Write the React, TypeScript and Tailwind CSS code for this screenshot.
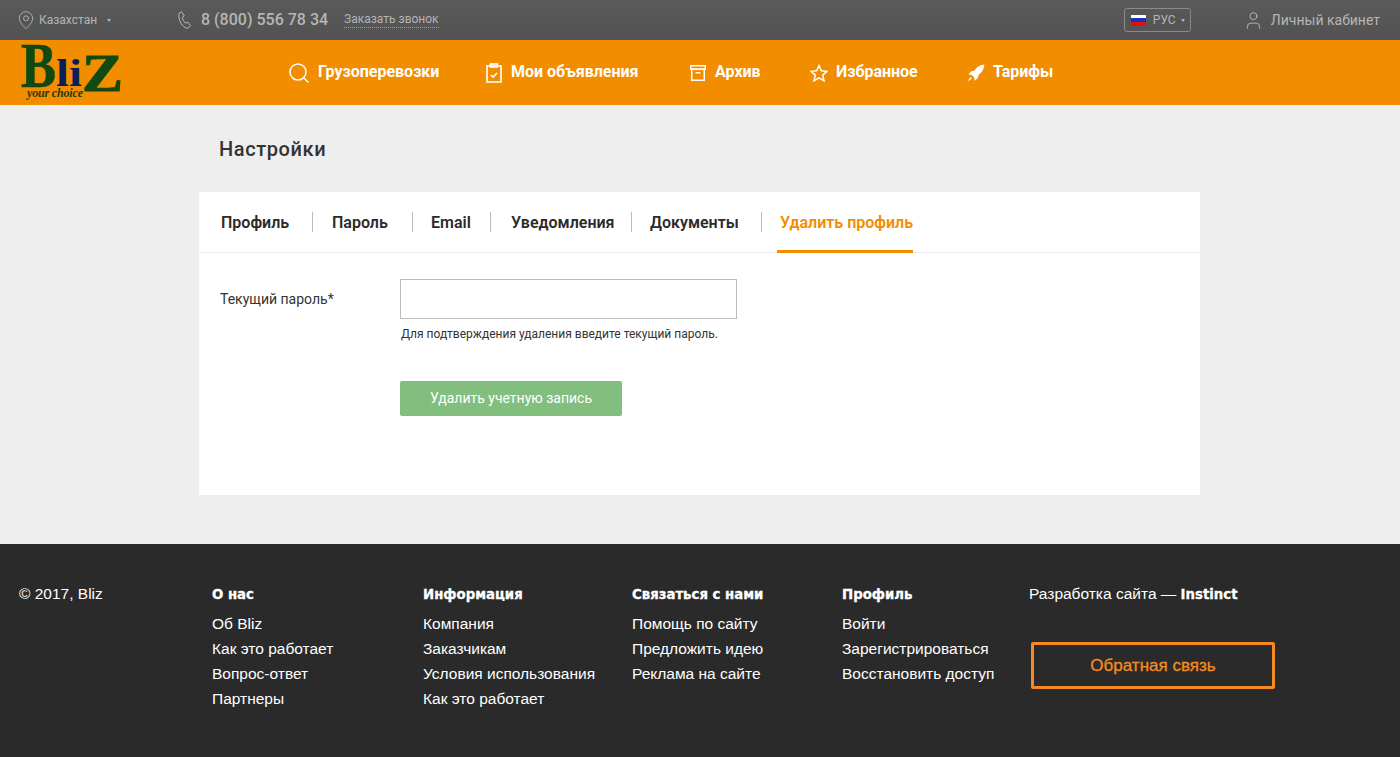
import { FC, ReactNode } from 'react';
import { MapPin, Search, User } from 'lucide-react';

const RocketIcon: FC = () => (
  <svg width="18" height="18" viewBox="0 0 18 18" fill="#fff">
    <path d="M17.500.5c-4.500.3-7.600 2.400-10 6L4 7.500 1.500 10.500l3.300.5 2.400 2.400.5 3.300 3-2.500 1-3.500c3.600-2.400 5.500-6 5.800-10.700z" />
    <path d="M3.500 13 .5 17.500 5 14.500z" />
  </svg>
);

const ClipboardIcon: FC = () => (
  <svg width="16" height="20" viewBox="0 0 16 20" fill="none" stroke="#fff" strokeWidth="1.6" className="block">
    <rect x="1" y="3" width="14" height="16" />
    <rect x="4.500" y="1" width="7" height="3" />
    <path d="M5 12l2 2 4-4" />
  </svg>
);

const ArchiveIcon: FC = () => (
  <svg width="16" height="16" viewBox="0 0 16 16" fill="none" stroke="#fff" strokeWidth="1.5" className="block">
    <rect x=".75" y=".75" width="14.500" height="3.500" />
    <rect x="1.750" y="4.250" width="12.500" height="11" />
    <path d="M5.500 7.750h5" />
  </svg>
);

const StarIcon: FC = () => (
  <svg width="18" height="18" viewBox="0 0 18 18" fill="none" stroke="#fff" strokeWidth="1.5" className="block">
    <path d="M9 1.500l2.300 5.300 5.700.5-4.300 3.800 1.300 5.700L9 13.800l-5 3 1.300-5.700L1 7.300l5.700-.5z" />
  </svg>
);

const PhoneIcon: FC = () => (
  <svg width="14" height="18" viewBox="0 0 14 18" fill="none" stroke="#bbbbbb" strokeWidth="1" className="block">
    <path d="M3.500 .8 1.200 2.300C.3 5 1 9 3 12.300c1.500 2.500 3.800 4.500 6.300 5l2.500-1.800.8-1-3-3.500-2 1.300C6 11 4.500 8.500 4.400 6.300l1.900-1.300z" />
  </svg>
);

const Caret: FC = () => (
  <span className="h-0 w-0 border-x-[2.5px] border-t-[3px] border-x-transparent border-t-[#b5b5b5]" />
);

const Logo: FC = () => (
  <svg width="102" height="54" viewBox="0 0 102 54" className="block overflow-visible">
    <text x="1" y="41" fontFamily="Liberation Serif" fontWeight="700" fontSize="64" fill="#0f4a12" stroke="#0f4a12" strokeWidth="0.6" textLength="35" lengthAdjust="spacingAndGlyphs">B</text>
    <text x="36" y="40" fontFamily="Liberation Serif" fontWeight="700" fontSize="38" fill="#0c1f55" textLength="26" lengthAdjust="spacingAndGlyphs">li</text>
    <text x="62" y="45" fontFamily="Liberation Serif" fontWeight="700" fontSize="52" fill="#0f4a12" stroke="#0f4a12" strokeWidth="1" textLength="41" lengthAdjust="spacingAndGlyphs">Z</text>
    <text x="7" y="51" fontFamily="Liberation Serif" fontStyle="italic" fontWeight="700" fontSize="12" fill="#2a3a10" textLength="56">your choice</text>
  </svg>
);

const navItems: { label: string; icon: ReactNode; width: string; slot: string }[] = [
  { label: 'Грузоперевозки', icon: <Search size={24} strokeWidth={1.5} className="-ml-[3px]" />, width: 'w-[196px]', slot: 'w-[28px]' },
  { label: 'Мои объявления', icon: <ClipboardIcon />, width: 'w-[204px]', slot: 'w-[25px]' },
  { label: 'Архив', icon: <ArchiveIcon />, width: 'w-[120px]', slot: 'w-[25px]' },
  { label: 'Избранное', icon: <StarIcon />, width: 'w-[157px]', slot: 'w-[26px]' },
  { label: 'Тарифы', icon: <RocketIcon />, width: 'w-[100px]', slot: 'w-[26px]' },
];

const tabs = [
  { label: 'Профиль', width: 'w-[94px]', pad: 'pl-[2px]' },
  { label: 'Пароль', width: 'w-[100px]', pad: 'pl-[19px]' },
  { label: 'Email', width: 'w-[78px]', pad: 'pl-[18px]' },
  { label: 'Уведомления', width: 'w-[141px]', pad: 'pl-[20px]' },
  { label: 'Документы', width: 'w-[130px]', pad: 'pl-[18px]' },
];

const footerCols = [
  { title: 'О нас', width: 'w-[211px]', links: ['Об Bliz', 'Как это работает', 'Вопрос-ответ', 'Партнеры'] },
  { title: 'Информация', width: 'w-[209px]', links: ['Компания', 'Заказчикам', 'Условия использования', 'Как это работает'] },
  { title: 'Связаться с нами', width: 'w-[210px]', links: ['Помощь по сайту', 'Предложить идею', 'Реклама на сайте'] },
  { title: 'Профиль', width: 'w-[187px]', links: ['Войти', 'Зарегистрироваться', 'Восстановить доступ'] },
];

export default function App() {
  return (
    <div className="flex min-h-[757px] flex-col bg-[#eeeeee] font-['Roboto',sans-serif]">
      <div className="flex h-10 items-center bg-gradient-to-b from-[#5a5a5a] to-[#525252] pl-[19px] text-[#b5b5b5]">
        <div className="flex w-[159px] items-center">
          <MapPin size={20} strokeWidth={1} className="-ml-[3px] text-[#bbbbbb]" />
          <span className="ml-[3px] text-[12px]">Казахстан</span>
          <span className="ml-[10px] mt-px flex"><Caret /></span>
        </div>
        <PhoneIcon />
        <span className="ml-[9px] text-[16px] font-medium">8 (800) 556 78 34</span>
        <span className="ml-[16px] border-b border-dotted border-[#999999] text-[12px] leading-[15px]">Заказать звонок</span>
        <div className="ml-auto flex h-[24px] w-[67px] items-center rounded-[3px] border border-[#8a8a8a] pl-[6px]">
          <div className="flex h-[11px] w-[15px] flex-col">
            <div className="flex-1 bg-white" />
            <div className="flex-1 bg-[#1c2fb5]" />
            <div className="flex-1 bg-[#e01010]" />
          </div>
          <span className="ml-[7px] text-[12px]">РУС</span>
          <span className="ml-[5px] flex"><Caret /></span>
        </div>
        <User size={21} strokeWidth={1} className="ml-[52px] text-[#bbbbbb]" />
        <span className="ml-[7px] mr-[20px] text-[14px]">Личный кабинет</span>
      </div>

      <div className="flex h-[65px] items-center bg-[#f28d00] pl-[20px] text-white">
        <div className="w-[270px]">
          <Logo />
        </div>
        {navItems.map((item) => (
          <div key={item.label} className={`flex items-center ${item.width}`}>
            <div className={`shrink-0 ${item.slot}`}>{item.icon}</div>
            <span className="-mt-px text-[16px] font-bold">{item.label}</span>
          </div>
        ))}
      </div>

      <div className="ml-[199px] w-[1001px] flex-1">
        <h1 className="pb-[29px] pl-[20px] pt-[30px] text-[20px] font-medium leading-[28px] tracking-[0.6px] text-[#333333]">Настройки</h1>
        <div className="h-[303px] bg-white">
          <div className="flex h-[61px] items-start border-b border-[#eeeeee] pl-[20px]">
            {tabs.map((tab) => (
              <div key={tab.label} className={`mt-[20px] flex h-[20px] items-center border-r border-[#bbbbbb] pt-[2px] text-[16px] font-semibold text-[#2b2b2b] ${tab.width} ${tab.pad}`}>
                {tab.label}
              </div>
            ))}
            <div className="ml-[15px] flex h-[61px] items-center border-b-[3px] border-[#f28d00] pl-[3px] pt-[4px] text-[16px] font-semibold text-[#f28d00]">
              Удалить профиль
            </div>
          </div>
          <div className="flex pl-[21px] pt-[26px]">
            <div className="w-[180px] pt-[10px] text-[14px] text-[#333333]">Текущий пароль*</div>
            <div>
              <input className="block h-[40px] w-[337px] border border-[#bbbbbb] bg-white" />
              <div className="ml-px mt-[7px] text-[12px] leading-[16px] text-[#333333]">Для подтверждения удаления введите текущий пароль.</div>
              <button className="mt-[39px] block h-[35px] w-[222px] rounded-[2px] bg-[#82bf7f] text-[14px] text-white">Удалить учетную запись</button>
            </div>
          </div>
        </div>
      </div>

      <div className="flex h-[213px] bg-[#2a2a2a] pl-[19px] pt-[41px] font-['Liberation_Sans',sans-serif] text-[15.5px] text-white">
        <div className="w-[193px] leading-[18px]">© 2017, Bliz</div>
        {footerCols.map((col) => (
          <div key={col.title} className={col.width}>
            <div className="mb-[7px] pt-px font-['DejaVu_Sans',sans-serif] text-[13.3px] font-bold leading-[18px] [-webkit-text-stroke:0.3px_white]">{col.title}</div>
            {col.links.map((link) => (
              <div key={link} className="leading-[25px]">{link}</div>
            ))}
          </div>
        ))}
        <div>
          <div className="leading-[18px]">
            Разработка сайта — <span className="font-['DejaVu_Sans',sans-serif] text-[13.3px] font-bold [-webkit-text-stroke:0.3px_white]">Instinct</span>
          </div>
          <div className="ml-[2px] mt-[38px] flex h-[47px] w-[244px] items-center justify-center rounded-[2px] border-[3px] border-[#f58a23] text-[17px] text-[#f58a23] [-webkit-text-stroke:0.3px_#f58a23]">
            Обратная связь
          </div>
        </div>
      </div>
    </div>
  );
}
